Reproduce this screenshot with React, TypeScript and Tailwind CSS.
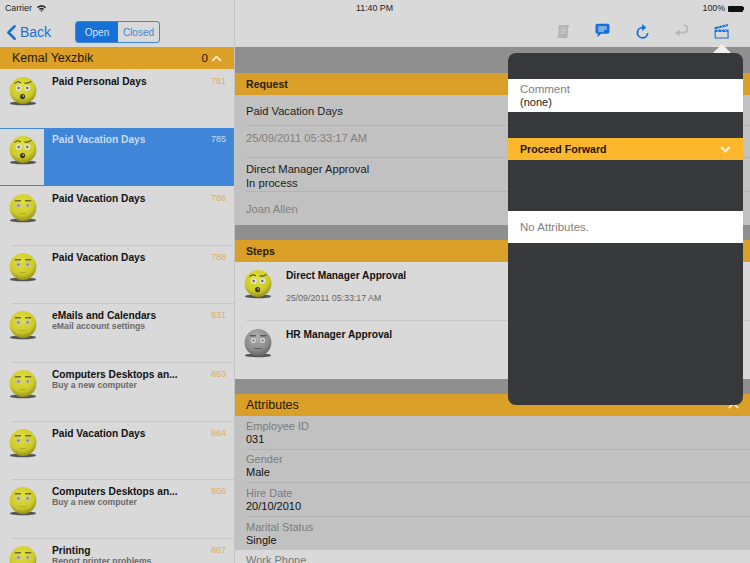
import { ChevronDown, ChevronLeft, ChevronUp } from "lucide-react";

type Mood = "worried" | "flat" | "gray";

const tickets: { title: string; sub?: string; num: number; mood: Mood; selected?: boolean }[] = [
  { title: "Paid Personal Days", num: 781, mood: "worried" },
  { title: "Paid Vacation Days", num: 785, mood: "worried", selected: true },
  { title: "Paid Vacation Days", num: 786, mood: "flat" },
  { title: "Paid Vacation Days", num: 788, mood: "flat" },
  { title: "eMails and Calendars", sub: "eMail account settings", num: 831, mood: "flat" },
  { title: "Computers Desktops an...", sub: "Buy a new computer", num: 863, mood: "flat" },
  { title: "Paid Vacation Days", num: 864, mood: "flat" },
  { title: "Computers Desktops an...", sub: "Buy a new computer", num: 866, mood: "flat" },
  { title: "Printing", sub: "Report printer problems", num: 887, mood: "flat" },
];

const attributes = [
  { label: "Employee ID", value: "031" },
  { label: "Gender", value: "Male" },
  { label: "Hire Date", value: "20/10/2010" },
  { label: "Marital Status", value: "Single" },
];

// Smiley avatar, drawn on a 28x30 box
function Face({ mood }: { mood: Mood }) {
  const id = `face-${mood}`;
  const gray = mood === "gray";
  return (
    <svg width="28" height="30" viewBox="0 0 28 30" className="shrink-0">
      <defs>
        <radialGradient id={id} cx="45%" cy="32%" r="72%">
          <stop offset="0%" stopColor={gray ? "#b0b0b0" : "#e2e03a"} />
          <stop offset="65%" stopColor={gray ? "#8c8c8c" : "#cdca2b"} />
          <stop offset="100%" stopColor={gray ? "#5c5c5c" : "#8a8718"} />
        </radialGradient>
      </defs>
      <ellipse cx="14" cy="26.4" rx="13" ry="1.9" fill="#333" opacity="0.8" />
      <circle cx="14" cy="13.5" r="13.4" fill={`url(#${id})`} />
      {mood === "worried" ? (
        <>
          <circle cx="9.7" cy="11" r="3" fill="#dfe2d2" />
          <circle cx="18.3" cy="11" r="3" fill="#dfe2d2" />
          <circle cx="9.7" cy="11" r="1.2" fill="#666" />
          <circle cx="18.3" cy="11" r="1.2" fill="#666" />
          <path d="M5.5 6.4Q9 3.2 12 5.8" stroke="#3a3a2a" strokeWidth="1" fill="none" />
          <path d="M15.5 6Q19 7 22.5 4.4" stroke="#3a3a2a" strokeWidth="1" fill="none" />
          <ellipse cx="13.6" cy="19.6" rx="2.5" ry="2.6" fill="#3c3320" />
          <circle cx="14.2" cy="19" r="0.9" fill="#aaa" />
        </>
      ) : (
        <>
          <circle cx="9.4" cy="11.4" r="2.6" fill={gray ? "#d0d0d0" : "#c2c59c"} />
          <circle cx="18.6" cy="11.4" r="2.6" fill={gray ? "#d0d0d0" : "#c2c59c"} />
          <circle cx="9.4" cy="11.4" r="1" fill="#707060" />
          <circle cx="18.6" cy="11.4" r="1" fill="#707060" />
          <path d="M5.8 6.8H12M16 6.8H22.2" stroke="#3a3a2a" strokeWidth="1" />
          <path d="M10.5 19.6H17.5" stroke={gray ? "#444" : "#a3a122"} strokeWidth="0.8" />
        </>
      )}
    </svg>
  );
}

function ScrollIcon() {
  return (
    <svg width="13" height="15" viewBox="0 0 15 16" fill="#b3b3b3">
      <path d="M3.5 0.5H14.5L12.5 4.5V12C12.5 14.2 11.5 15.5 10 15.5H1C0.4 15.5 0 15 0.3 14.4L1.8 11.5V3C1.8 1.5 2.5 0.5 3.5 0.5Z" />
      <path d="M4 4.2H10.5M4 7H10.5M3.6 9.8H10" stroke="#dadada" strokeWidth="0.9" />
    </svg>
  );
}

function ChatIcon() {
  return (
    <svg width="15" height="15" viewBox="0 0 16 16" className="-mt-[2px]">
      <path
        d="M2.6 0.8H13.4C14.7 0.8 15.5 1.6 15.5 2.9V9.3C15.5 10.6 14.7 11.4 13.4 11.4H6.6L2.4 15.2L3.1 11.4H2.6C1.3 11.4 0.5 10.6 0.5 9.3V2.9C0.5 1.6 1.3 0.8 2.6 0.8Z"
        fill="#1670d6"
      />
      <path d="M3.5 4.2H12.5M3.5 6.4H12.5M3.5 8.6H9.5" stroke="#e4eaf2" strokeWidth="1.1" />
    </svg>
  );
}

function RefreshIcon() {
  return (
    <svg width="13" height="15" viewBox="0 0 14 16">
      <path d="M7 3.8A5.5 5.5 0 1 0 12.5 9.6" fill="none" stroke="#1670d6" strokeWidth="2" />
      <path d="M6.6 0L11 3.8L6.6 7.4Z" fill="#1670d6" />
    </svg>
  );
}

function ReturnIcon() {
  return (
    <svg width="15" height="15" viewBox="0 0 15 15">
      <path d="M9.6 1.6C11 0.8 13.4 1.8 13.4 4.4C13.4 7.5 11.2 8.7 8.5 8.7H4.5" fill="none" stroke="#b9b9b9" strokeWidth="1.8" />
      <path d="M5.6 5.2L0.8 8.8L5.6 12.6Z" fill="#b9b9b9" />
    </svg>
  );
}

function ClapperIcon() {
  return (
    <svg width="15" height="15" viewBox="0 0 15 15" fill="#1670d6">
      <path d="M0.3 3.3L13.6 0L14.2 1.9L0.9 5.2Z" />
      <path d="M0.6 5.6H14.6V8H0.6Z" />
      <path d="M0.6 8H1.7V13.4H13.5V8H14.6V14.6H0.6Z" />
      <path d="M3 0.9L5 3.6M6.6 0.2L8.6 2.9M10.2 -0.4L12.2 2.2" stroke="#dadada" strokeWidth="0.8" />
      <path d="M3 5.6L4.6 8M7 5.6L8.6 8M11 5.6L12.6 8" stroke="#dadada" strokeWidth="0.8" />
    </svg>
  );
}

export default function App() {
  return (
    <div
      className="relative h-[563px] w-[750px] overflow-hidden bg-[#d9d9d9] text-black"
      style={{ fontFamily: '"Liberation Sans", Arial, sans-serif' }}
    >
      {/* Status bar */}
      <div className="flex h-[16px] items-center justify-between pl-[5px] pr-[6px] pt-[1px] text-[8.8px] text-[#222]">
        <div className="flex w-[100px] items-center gap-[5px]">
          Carrier
          <svg width="9" height="7" viewBox="0 0 9 7" fill="#222">
            <path d="M0 2.2C2.4 -0.4 6.6 -0.4 9 2.2L8 3.2C6 1.2 3 1.2 1 3.2Z" />
            <path d="M1.8 4C3.4 2.4 5.6 2.4 7.2 4L6.2 5C5.2 4 3.8 4 2.8 5Z" />
            <path d="M3.4 5.6C4 5 5 5 5.6 5.6L4.5 6.9Z" />
          </svg>
        </div>
        <div>11:40 PM</div>
        <div className="flex w-[100px] items-center justify-end gap-[3px]">
          100%
          <span className="h-[6px] w-[15px] rounded-[1px] bg-[#111]" />
          <span className="-ml-[3px] h-[3px] w-[1px] bg-[#111]" />
        </div>
      </div>
      {/* Pane divider runs up through the status bar */}
      <div className="absolute left-[234px] top-0 h-[16px] w-px bg-[#c4c4c4]" />

      <div className="flex">
        {/* Left pane */}
        <div className="w-[235px] shrink-0 border-r border-[#c4c4c4]">
          <div className="flex h-[31px] items-center pt-[1px]">
            <div className="flex w-[75px] items-center text-[#1670d6]">
              <ChevronLeft size={25} strokeWidth={2.4} className="-ml-[1px] -mr-[4px] shrink-0" />
              <span className="text-[14px]">Back</span>
            </div>
            <div className="flex h-[22px] w-[85px] overflow-hidden rounded-[3px] border border-[#3f85d8] text-[10px]">
              <div className="flex w-[42px] items-center justify-center bg-[#1670d6] text-[#d8e6f6]">Open</div>
              <div className="flex flex-1 items-center justify-center text-[#3f85d8]">Closed</div>
            </div>
          </div>
          <div className="flex h-[22px] items-center bg-[#dca027] pl-[12px] pr-[10px] pt-[1px] text-[#1d1608]">
            <span className="flex-1 text-[12.5px]">Kemal Yexzbik</span>
            <span className="pl-[1px] pt-[1px] text-[11.5px]">0</span>
            <ChevronUp size={15} strokeWidth={3} className="-mt-[1px] ml-[1px] text-[#f3ead4]" />
          </div>
          <div>
            {tickets.map((t, i) => (
              <div key={t.num} className={`relative h-[58.6px] ${t.selected ? "border-y border-[#3f85d8]" : ""}`}>
                {i > 0 && !t.selected && !tickets[i - 1].selected && (
                  <div className="ml-[12px] h-px bg-[#c6c6c6]" />
                )}
                <div className={`flex h-full ${t.selected ? "" : i > 0 && !tickets[i - 1].selected ? "-mt-px" : ""}`}>
                  <div className={`w-[44px] shrink-0 pl-[9px] ${t.selected ? "pt-[7px]" : "pt-[8px]"}`}>
                    <Face mood={t.mood} />
                  </div>
                  <div className={`flex min-w-0 flex-1 pl-[8px] pr-[8px] ${t.selected ? "bg-[#3f85d8] pt-[4px]" : "pt-[6px]"}`}>
                    <div className="min-w-0 flex-1">
                      <div className={`truncate text-[10.2px] font-bold leading-[13px] ${t.selected ? "text-[#c9dcf2]" : "text-[#111]"}`}>
                        {t.title}
                      </div>
                      {t.sub && <div className="text-[8.7px] font-bold leading-[9px] text-[#6a6a6a]">{t.sub}</div>}
                    </div>
                    <div className={`pl-1 text-[9px] leading-[13px] ${t.selected ? "text-[#c9dcf2]" : "text-[#dab062]"}`}>
                      {t.num}
                    </div>
                  </div>
                </div>
              </div>
            ))}
          </div>
        </div>

        {/* Right pane */}
        <div className="min-w-0 flex-1">
          <div className="flex h-[31px] items-center justify-end pr-[9px]">
            {[<ScrollIcon key="scroll" />, <ChatIcon key="chat" />, <RefreshIcon key="refresh" />, <ReturnIcon key="return" />, <ClapperIcon key="clapper" />].map((icon) => (
              <div key={icon.key} className="flex w-[39.5px] justify-center">
                {icon}
              </div>
            ))}
          </div>
          <div className="h-[26px] bg-[#8f8f8f]" />
          <div className="h-[22px] bg-[#d99f27] pl-[11px] text-[10.6px] font-bold leading-[22px] text-[#2a200c]">Request</div>
          <div className="bg-[#c1c1c1] pl-[11px] text-[11.2px]">
            <div className="flex h-[31px] items-center border-b border-[#b3b3b3] pt-[2px] text-[#1c1c1c]">Paid Vacation Days</div>
            <div className="flex h-[32px] items-start border-b border-[#b3b3b3] pt-[4px] text-[#808080]">25/09/2011 05:33:17 AM</div>
            <div className="flex h-[34px] flex-col justify-center border-b border-[#b3b3b3] pt-[2px] leading-[14px] text-[#1c1c1c]">
              <div>Direct Manager Approval</div>
              <div>In process</div>
            </div>
            <div className="flex h-[33px] items-center pt-[1px] text-[#808080]">Joan Allen</div>
          </div>
          <div className="h-[15px] bg-[#8f8f8f]" />
          <div className="h-[22px] bg-[#d99f27] pl-[11px] text-[10.6px] font-bold leading-[22px] text-[#2a200c]">Steps</div>
          <div className="bg-[#d9d9d9] pl-[9px]">
            <div className="flex h-[58px] pt-[8px]">
              <div className="w-[42px] shrink-0">
                <Face mood="worried" />
              </div>
              <div className="pt-[1px]">
                <div className="text-[10.2px] font-bold leading-[10px] text-[#111]">Direct Manager Approval</div>
                <div className="pt-[11px] text-[8.8px] text-[#666]">25/09/2011 05:33:17 AM</div>
              </div>
            </div>
            <div className="ml-[2px] h-px bg-[#c8c8c8]" />
            <div className="flex h-[58px] pt-[8px]">
              <div className="w-[42px] shrink-0">
                <Face mood="gray" />
              </div>
              <div className="pt-[1px] text-[10.2px] font-bold leading-[10px] text-[#111]">HR Manager Approval</div>
            </div>
          </div>
          <div className="h-[15px] bg-[#8f8f8f]" />
          <div className="flex h-[22px] items-center justify-between bg-[#d99f27] pl-[11px] pr-[8px] text-[12.5px] text-[#1d1608]">
            Attributes
            <ChevronUp size={17} strokeWidth={2.6} className="text-[#f3ead4]" />
          </div>
          <div className="bg-[#c1c1c1] pl-[11px] text-[11px] leading-[13px]">
            {attributes.map((a) => (
              <div key={a.label} className="flex h-[33.5px] flex-col justify-center border-b border-[#b3b3b3] pt-[1px] last:border-b-0">
                <div className="font-medium text-[#7c7c7c]">{a.label}</div>
                <div className="text-[#111]">{a.value}</div>
              </div>
            ))}
          </div>
          <div className="bg-[#d9d9d9] pl-[11px] pt-[4px] text-[11px] leading-[13px] text-[#777]">Work Phone</div>
        </div>
      </div>

      {/* Popover over the right pane */}
      <div className="absolute left-[508px] top-[53px] h-[352px] w-[235px] rounded-[8px] bg-[#37383c]">
        <div className="absolute -top-[9px] right-[12px] h-0 w-0 border-x-[9px] border-b-[9px] border-x-transparent border-b-[#f0f0f0]" />
        <div className="mt-[26px] h-[33px] bg-white pl-[12px] pt-[4px] text-[11.5px] leading-[13px]">
          <div className="text-[#808080]">Comment</div>
          <div className="text-[11px] text-[#222]">(none)</div>
        </div>
        <div className="mt-[26px] flex h-[22px] items-center justify-between bg-[#fdb72c] pl-[12px] pr-[10px] pt-[1px]">
          <span className="text-[10.6px] font-bold text-[#1d1608]">Proceed Forward</span>
          <ChevronDown size={15} strokeWidth={3.4} className="-mt-[1px] text-[#fbf1dc]" />
        </div>
        <div className="mt-[51px] flex h-[32px] items-center bg-white pl-[12px] pt-[1px] text-[11.5px] text-[#808080]">No Attributes.</div>
      </div>
    </div>
  );
}
